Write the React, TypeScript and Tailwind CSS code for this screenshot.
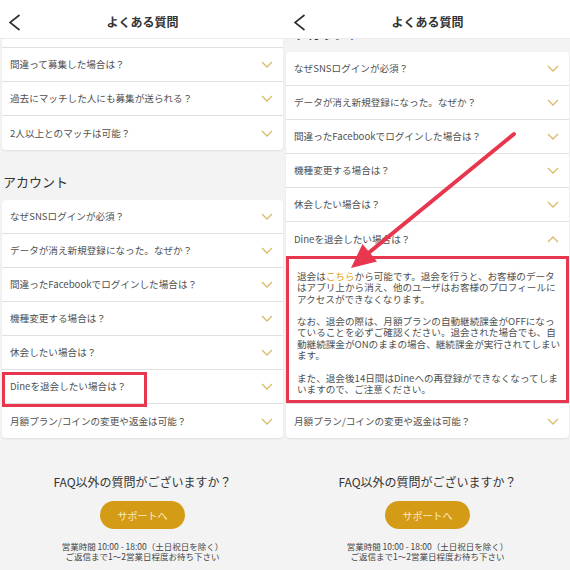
import React from 'react';

const RED = '#e8364e';

const Chevron = ({ up = false }: { up?: boolean }) => (
  <svg width="12" height="7" viewBox="0 0 12 7" className="shrink-0">
    <polyline
      points={up ? '1,6 6,1 11,6' : '1,1 6,6 11,1'}
      fill="none"
      stroke="#d9bb66"
      strokeWidth="1.3"
    />
  </svg>
);

const Header = () => (
  <div className="grid h-[39px] shrink-0 grid-cols-[40px_1fr_40px] items-center border-b border-[#ececec] bg-white pt-[6px]">
    <div className="pl-[8px]">
      <svg width="13" height="17" viewBox="0 0 13 17">
        <polyline points="11.5,1 2,8.5 11.5,16" fill="none" stroke="#2f2f2f" strokeWidth="1.6" />
      </svg>
    </div>
    <span className="text-center text-[12px] font-bold text-[#333]">よくある質問</span>
    <div />
  </div>
);

type RowProps = { q: string; up?: boolean; last?: boolean; marked?: boolean };

const Row = ({ q, up, last, marked }: RowProps) => (
  <div
    className={`relative flex h-[34px] items-center justify-between pl-[8px] pr-[10px] ${
      last ? '' : 'border-b border-[#e1e1e1]'
    }`}
  >
    <span className="whitespace-nowrap text-[9.6px] text-[#4f4f4f]">{q}</span>
    <Chevron up={up} />
    {marked && (
      <div className="pointer-events-none absolute left-0 top-[2px] h-[35px] w-[145px] border-[3px] border-[#e8364e]" />
    )}
  </div>
);

const Footer = ({ top }: { top: string }) => (
  <div className={`flex flex-col items-center ${top}`}>
    <p className="text-[12px] leading-[16px] text-[#333]">FAQ以外の質問がございますか？</p>
    <button className="mt-[11px] h-[28px] w-[85px] rounded-full bg-[#d49b17] text-[10px] text-[#fcebc6]">
      サポートへ
    </button>
    <p className="mt-[12px] text-center text-[8.5px] leading-[10px] text-[#444]">
      営業時間 10:00 - 18:00（土日祝日を除く）
      <br />
      ご返信まで1〜2営業日程度お待ち下さい
    </p>
  </div>
);

const accountQs = [
  'なぜSNSログインが必須？',
  'データが消え新規登録になった。なぜか？',
  '間違ったFacebookでログインした場合は？',
  '機種変更する場合は？',
  '休会したい場合は？',
];

const App: React.FC = () => {
  return (
    <div className="relative grid h-[570px] w-[570px] grid-cols-2 overflow-hidden bg-[#f3f3f3] font-['Noto_Sans_CJK_JP','Noto_Sans',sans-serif]">
      {/* left screen */}
      <div className="flex h-[570px] flex-col overflow-hidden">
        <Header />
        <div className="mx-[2px] overflow-hidden rounded-b-[4px] bg-white shadow-[0_1px_2px_rgba(0,0,0,0.08)]">
          <div className="h-[9px] border-b border-[#e1e1e1]" />
          <Row q="間違って募集した場合は？" />
          <Row q="過去にマッチした人にも募集が送られる？" />
          <Row q="2人以上とのマッチは可能？" last />
        </div>
        <h2 className="mb-[8px] mt-[22px] pl-[3px] text-[13px] leading-[20px] text-[#333]">アカウント</h2>
        <div className="mx-[2px] rounded-[4px] bg-white shadow-[0_1px_2px_rgba(0,0,0,0.08)]">
          {accountQs.map((q) => (
            <Row key={q} q={q} />
          ))}
          <Row q="Dineを退会したい場合は？" marked />
          <Row q="月額プラン/コインの変更や返金は可能？" last />
        </div>
        <Footer top="mt-[36px]" />
      </div>

      {/* right screen */}
      <div className="flex h-[570px] flex-col overflow-hidden">
        <Header />
        <div className="h-[13px] shrink-0 overflow-hidden">
          <p className="mt-[-13px] pl-[10px] text-[13px] leading-[15px] text-[#333]">アカウント</p>
        </div>
        <div className="ml-[1px] mr-[1px] rounded-[4px] bg-white shadow-[0_1px_2px_rgba(0,0,0,0.08)]">
          {accountQs.map((q) => (
            <Row key={q} q={q} />
          ))}
          <Row q="Dineを退会したい場合は？" up last />
          <div className="h-[147px] whitespace-nowrap border-[3px] border-[#e8364e] pb-[4px] pl-[8px] pt-[12px] text-[9.6px] leading-[11.3px] text-[#4f4f4f]">
            <p>
              退会は<span className="text-[#e0a320]">こちら</span>から可能です。退会を行うと、お客様のデータ
              <br />
              はアプリ上から消え、他のユーザはお客様のプロフィールに
              <br />
              アクセスができなくなります。
            </p>
            <p className="mt-[11.3px]">
              なお、退会の際は、月額プランの自動継続課金がOFFになっ
              <br />
              ていることを必ずご確認ください。退会された場合でも、自
              <br />
              動継続課金がONのままの場合、継続課金が実行されてしまい
              <br />
              ます。
            </p>
            <p className="mt-[11.3px]">
              また、退会後14日間はDineへの再登録ができなくなってしま
              <br />
              いますので、ご注意ください。
            </p>
          </div>
          <div className="border-t border-[#e1e1e1]">
            <Row q="月額プラン/コインの変更や返金は可能？" last />
          </div>
        </div>
        <Footer top="mt-[36px]" />
      </div>

      {/* red arrow annotation */}
      <svg className="pointer-events-none absolute inset-0" width="570" height="570" viewBox="0 0 570 570">
        <line x1="514" y1="134" x2="366" y2="255" stroke={RED} strokeWidth="4" strokeLinecap="round" />
        <polygon points="351,268 362.5,244 377,261.5" fill={RED} />
      </svg>
    </div>
  );
};

export default App;
